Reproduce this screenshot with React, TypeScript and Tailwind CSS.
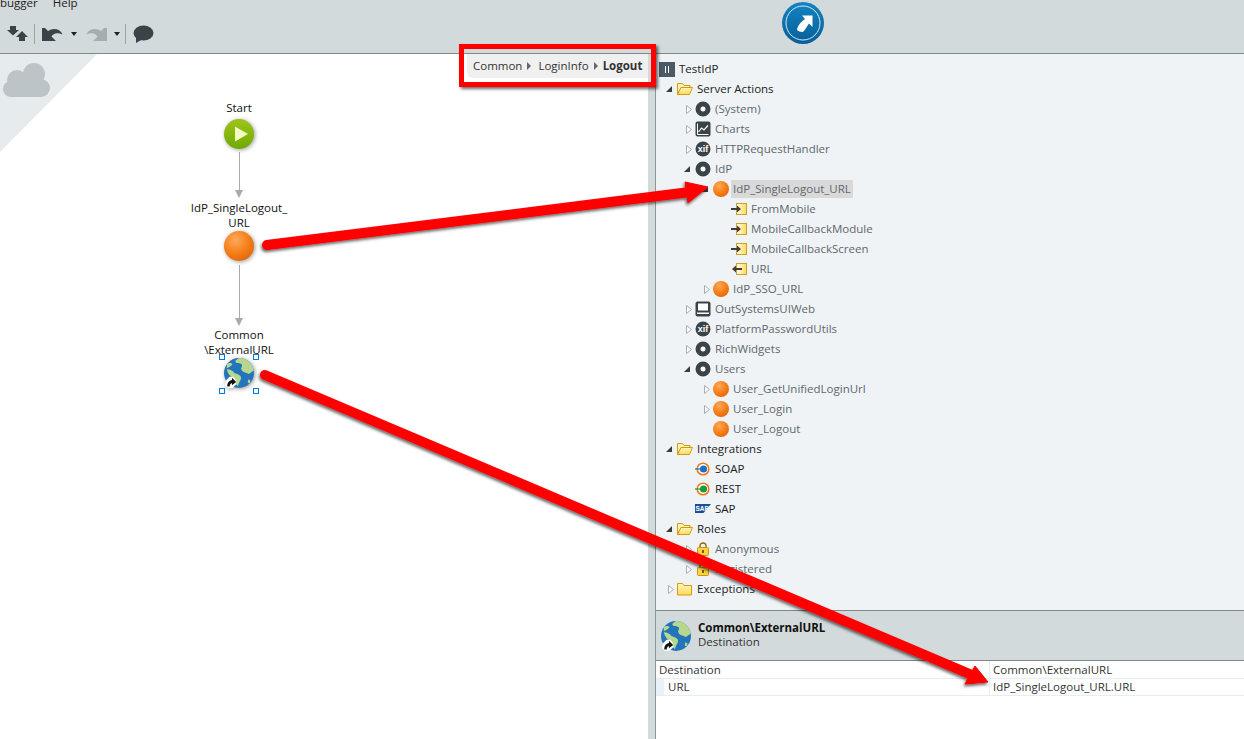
import React from "react"

const UI_FONT = "font-['Open_Sans','Noto_Sans',sans-serif]"

function Ball({ size = 16 }: { size?: number }) {
  return (
    <svg width={size} height={size} viewBox="0 0 32 32">
      <defs>
        <radialGradient id="ballGrad" cx="0.38" cy="0.3" r="0.8">
          <stop offset="0" stopColor="#ffa95c" />
          <stop offset="0.55" stopColor="#f57f17" />
          <stop offset="1" stopColor="#e2620a" />
        </radialGradient>
      </defs>
      <circle cx="16" cy="16" r="16" fill="url(#ballGrad)" />
    </svg>
  )
}

function ModuleIcon() {
  return (
    <svg width="16" height="16" viewBox="0 0 16 16">
      <circle cx="8" cy="8" r="5" fill="#fff" stroke="#3a4448" strokeWidth="5" />
    </svg>
  )
}

function XifIcon() {
  return (
    <svg width="16" height="16" viewBox="0 0 16 16">
      <circle cx="8" cy="8" r="7.5" fill="#3a4448" />
      <text x="8" y="11" textAnchor="middle" fontSize="9" fontWeight="700" fill="#fff" fontFamily="Liberation Sans, sans-serif">xif</text>
    </svg>
  )
}

function ChartIcon() {
  return (
    <svg width="16" height="16" viewBox="0 0 16 16">
      <rect x="0.5" y="0.5" width="15" height="15" rx="2" fill="#3a4448" />
      <path d="M2.5 2.5V13.5H13.5" fill="none" stroke="#fff" strokeWidth="1" />
      <path d="M3.5 11L6.5 7L9 9L13 4.5" fill="none" stroke="#fff" strokeWidth="1.2" />
    </svg>
  )
}

function MonitorIcon() {
  return (
    <svg width="16" height="16" viewBox="0 0 16 16">
      <rect x="0.5" y="0.5" width="15" height="15" rx="2" fill="#3a4448" />
      <rect x="3" y="2.5" width="10" height="7" fill="#fff" />
      <rect x="2" y="11.5" width="12" height="1.5" fill="#fff" />
    </svg>
  )
}

function FolderIcon({ open = true }: { open?: boolean }) {
  return (
    <svg width="16" height="14" viewBox="0 0 16 14">
      <defs>
        <linearGradient id="folderGrad" x1="0" y1="0" x2="0" y2="1">
          <stop offset="0" stopColor="#fff6bf" />
          <stop offset="1" stopColor="#ffd95a" />
        </linearGradient>
      </defs>
      {open ? (
        <>
          <path d="M0.5 12.5V1.5H5.5L7 3.5H13V5.5H4L0.5 12.5Z" fill="#fff3b5" stroke="#d69a0d" />
          <path d="M0.5 12.5L4 5.5H15.5L12.5 12.5Z" fill="url(#folderGrad)" stroke="#d69a0d" />
        </>
      ) : (
        <path d="M0.5 13V1.5H5.5L7 3.5H14.5V13Z" fill="url(#folderGrad)" stroke="#d69a0d" />
      )}
    </svg>
  )
}

function ParamIcon({ dir }: { dir: "in" | "out" }) {
  return (
    <svg width="16" height="12" viewBox="0 0 16 12">
      <defs>
        <linearGradient id="paramGrad" x1="0" y1="0" x2="1" y2="0">
          <stop offset="0" stopColor="#fff" />
          <stop offset="1" stopColor="#ffd94f" />
        </linearGradient>
      </defs>
      <rect x="5.5" y="0.5" width="10" height="11" fill="url(#paramGrad)" stroke="#c9a227" />
      {dir === "in" ? (
        <path d="M0 5H6V2.5L10 6L6 9.5V7H0Z" fill="#4a3a34" />
      ) : (
        <path d="M11 5H5V2.5L1 6L5 9.5V7H11Z" fill="#4a3a34" />
      )}
    </svg>
  )
}

function LockIcon() {
  return (
    <svg width="12" height="14" viewBox="0 0 12 14">
      <path d="M3 6V3.8C3 2.2 4.3 1 6 1S9 2.2 9 3.8V6" fill="none" stroke="#8f6a12" strokeWidth="1.4" />
      <rect x="0.5" y="5.5" width="11" height="8" rx="1" fill="#ffd23f" stroke="#c9960f" />
      <rect x="5" y="8" width="2" height="3" fill="#7a5a10" />
    </svg>
  )
}

function ServiceIcon({ color }: { color: string }) {
  return (
    <svg width="16" height="14" viewBox="0 0 16 14">
      <circle cx="8" cy="7" r="5.8" fill="#fff" stroke="#ee7a1a" strokeWidth="1.6" />
      <circle cx="8.5" cy="7" r="3.6" fill={color} />
      <path d="M0 7H5" stroke={color} strokeWidth="1.2" />
    </svg>
  )
}

function SapIcon() {
  return (
    <svg width="16" height="10" viewBox="0 0 16 10">
      <path d="M0 0H16L8.5 9H0Z" fill="#1b4f9c" />
      <text x="0.5" y="7" fontSize="6.5" fontWeight="700" fill="#fff" fontFamily="Liberation Sans, sans-serif">SAP</text>
    </svg>
  )
}

function Globe({ size }: { size: number }) {
  return (
    <svg width={size} height={size} viewBox="0 0 32 32">
      <defs>
        <clipPath id="globeClip"><circle cx="16" cy="16" r="16" /></clipPath>
      </defs>
      <g clipPath="url(#globeClip)">
        <rect width="32" height="32" fill="#2474bb" />
        <path d="M16 0C13 2 11 3 13 5C15 6 18 5 19 7C20 10 17 10 19 13C21 16 24 15 26 17C28 17 30 14 33 13V0Z" fill="#b7d78f" />
        <path d="M3 6C6 5 8 5 9 7C7 9 5 10 3 11Z" fill="#b7d78f" />
        <path d="M3 12C7 12 10 14 11 16C14 17 17 18 18 20C19 23 16 25 15 30C12 28 11 24 10 21C7 20 4 17 3 12Z" fill="#b7d78f" />
        <path d="M26 23C28 23 29 25 27 27C25 27 25 25 26 23Z" fill="#b7d78f" />
      </g>
      <path d="M2 24L6 20H10L13 24V28L9 32H4L1 29Z" fill="#fff" />
      <path d="M3.5 30.5C3.5 26 5.5 24 8.5 23.5V21L13 25.5L8.5 29V26.8C7 27 6.2 28.3 6 30.5Z" fill="#111" />
    </svg>
  )
}

function PlayBall() {
  return (
    <svg width="30" height="30" viewBox="0 0 30 30">
      <defs>
        <linearGradient id="startGrad" x1="0" y1="0" x2="0" y2="1">
          <stop offset="0" stopColor="#9ec41d" />
          <stop offset="1" stopColor="#6eaa00" />
        </linearGradient>
      </defs>
      <circle cx="15" cy="15" r="15" fill="url(#startGrad)" />
      <path d="M11 7.5L24 15L11 22.5Z" fill="#f3fbc0" />
    </svg>
  )
}

function Caret() {
  return <span className="w-0 h-0 border-x-[3.5px] border-x-transparent border-t-[4px] border-t-[#1c2326]" />
}

function Toolbar() {
  return (
    <div className="flex items-center h-[36px] pl-[7px]">
      <svg width="21" height="16" viewBox="0 0 21 16">
        <path d="M0 4H3V0H9V4H12L6 9.5Z" fill="#3a4448" />
        <path d="M9 11L15 5L21 11H18V15H12V11Z" fill="#3a4448" />
      </svg>
      <div className="w-px h-5 bg-[#9aa3a5] ml-[6px] mr-[7px]" />
      <svg width="21" height="15" viewBox="0 0 21 15">
        <path d="M0 1V14H14L9.5 9.5C11 6.5 15 5 20.5 7.5C18 1.5 11 0.5 6 4L3 1Z" fill="#3a4448" />
      </svg>
      <div className="ml-[8px] mr-[9px] flex"><Caret /></div>
      <svg width="21" height="15" viewBox="0 0 21 15">
        <path d="M21 1V14H7L11.5 9.5C10 6.5 6 5 0.5 7.5C3 1.5 10 0.5 15 4L18 1Z" fill="#a5adaf" />
      </svg>
      <div className="ml-[7px] flex"><Caret /></div>
      <div className="w-px h-5 bg-[#9aa3a5] ml-[5px] mr-[7px]" />
      <svg width="21" height="19" viewBox="0 0 21 19">
        <ellipse cx="10.5" cy="8" rx="10" ry="7.5" fill="#3a4448" />
        <path d="M3 12L3 18L10 14Z" fill="#3a4448" />
      </svg>
    </div>
  )
}

function TopBar() {
  return (
    <div className="flex h-[54px] shrink-0 bg-[#d3dadb] border-b border-[#81888a]">
      <div className="w-[782px] overflow-hidden">
        <div className={`flex h-[17px] -mt-[1px] items-end text-[11.5px] leading-none text-[#222] ${UI_FONT}`}>
          <span className="pb-[8px]">bugger</span>
          <span className="ml-[15px] pb-[8px]">Help</span>
        </div>
        <Toolbar />
      </div>
      <div className="pt-[2px]">
        <svg width="42" height="42" viewBox="0 0 42 42">
          <defs>
            <linearGradient id="pubGrad" x1="0" y1="0" x2="0" y2="1">
              <stop offset="0" stopColor="#1383c2" />
              <stop offset="1" stopColor="#075f99" />
            </linearGradient>
          </defs>
          <circle cx="21" cy="21" r="21" fill="url(#pubGrad)" />
          <circle cx="21" cy="21" r="17" fill="none" stroke="#d4e7f2" strokeWidth="1" />
          <path d="M20 13.5H30.5V25L27 21.5C25 24 24 27 21 30C18 30 16 29 15 28C15.5 24 18.5 20 23 17Z" fill="#fff" />
        </svg>
      </div>
    </div>
  )
}

function FlowNode({ label, x, y, children }: { label: string[]; x: number; y: number; children: React.ReactNode }) {
  // x = centre of the icon, y = top of the label, on the free canvas
  return (
    <div className="absolute w-[120px] flex flex-col items-center" style={{ left: x - 60, top: y }}>
      <div className="text-[11.5px] leading-[15px] text-[#111] text-center whitespace-nowrap">
        {label.map((l) => <div key={l}>{l}</div>)}
      </div>
      {children}
    </div>
  )
}

function Connector({ x, y, h }: { x: number; y: number; h: number }) {
  return (
    <div className="absolute flex flex-col items-center w-[10px]" style={{ left: x - 5, top: y }}>
      <div className="w-px bg-[#a9a9a9]" style={{ height: h }} />
      <div className="w-0 h-0 border-x-[4px] border-x-transparent border-t-[8px] border-t-[#a9a9a9]" />
    </div>
  )
}

function Handle({ x, y }: { x: number; y: number }) {
  return <div className="absolute w-[6px] h-[6px] bg-white border border-[#0078d7]" style={{ left: x, top: y }} />
}

function Canvas() {
  return (
    <div className="relative w-[648px] bg-white overflow-hidden">
      <svg className="absolute left-0 top-0" width="100" height="100" viewBox="0 0 100 100">
        <path d="M0 0H97L0 98Z" fill="#e6ebed" />
        <g fill="#bdc4c7">
          <circle cx="34" cy="20" r="11" />
          <circle cx="17" cy="26" r="10" />
          <circle cx="11" cy="35" r="8" />
          <circle cx="41" cy="34" r="9" />
          <rect x="11" y="28" width="30" height="15" />
        </g>
      </svg>

      <FlowNode label={["Start"]} x={239} y={46}>
        <div className="mt-[4px] drop-shadow-[1px_1px_2px_rgba(0,0,0,0.4)] flex"><PlayBall /></div>
      </FlowNode>
      <Connector x={239} y={98} h={38} />
      <FlowNode label={["IdP_SingleLogout_", "URL"]} x={239} y={146}>
        <div className="mt-[1px] drop-shadow-[1px_1px_2px_rgba(0,0,0,0.4)] flex"><Ball size={30} /></div>
      </FlowNode>
      <Connector x={239} y={211} h={53} />
      <FlowNode label={["Common", "\\ExternalURL"]} x={239} y={273}>
        <div className="mt-[1px] drop-shadow-[1px_1px_2px_rgba(0,0,0,0.4)] flex"><Globe size={30} /></div>
      </FlowNode>
      <Handle x={219} y={300} />
      <Handle x={253} y={300} />
      <Handle x={219} y={334} />
      <Handle x={253} y={334} />

      <div className={`absolute right-0 top-0 h-[24px] w-[181px] bg-[#f0f0f0] rounded-bl-[6px] flex items-center gap-[5px] pl-[6px] text-[11.5px] text-[#333] ${UI_FONT}`}>
        <span>Common</span>
        <span className="w-0 h-0 border-y-[4px] border-y-transparent border-l-[4px] border-l-[#666]" />
        <span className="-ml-[0px] pl-[2px]">LoginInfo</span>
        <span className="w-0 h-0 border-y-[4px] border-y-transparent border-l-[4px] border-l-[#666]" />
        <span className="font-bold">Logout</span>
      </div>
    </div>
  )
}

type TreeRow = {
  level: number
  arrow?: "open" | "closed"
  icon?: React.ReactNode
  label: string
  dark?: boolean
  selected?: boolean
}

const rows: TreeRow[] = [
  { level: 1, arrow: "open", icon: <FolderIcon />, label: "Server Actions", dark: true },
  { level: 2, arrow: "closed", icon: <ModuleIcon />, label: "(System)" },
  { level: 2, arrow: "closed", icon: <ChartIcon />, label: "Charts" },
  { level: 2, arrow: "closed", icon: <XifIcon />, label: "HTTPRequestHandler" },
  { level: 2, arrow: "open", icon: <ModuleIcon />, label: "IdP" },
  { level: 3, arrow: "open", icon: <Ball />, label: "IdP_SingleLogout_URL", selected: true },
  { level: 4, icon: <ParamIcon dir="in" />, label: "FromMobile" },
  { level: 4, icon: <ParamIcon dir="in" />, label: "MobileCallbackModule" },
  { level: 4, icon: <ParamIcon dir="in" />, label: "MobileCallbackScreen" },
  { level: 4, icon: <ParamIcon dir="out" />, label: "URL" },
  { level: 3, arrow: "closed", icon: <Ball />, label: "IdP_SSO_URL" },
  { level: 2, arrow: "closed", icon: <MonitorIcon />, label: "OutSystemsUIWeb" },
  { level: 2, arrow: "closed", icon: <XifIcon />, label: "PlatformPasswordUtils" },
  { level: 2, arrow: "closed", icon: <ModuleIcon />, label: "RichWidgets" },
  { level: 2, arrow: "open", icon: <ModuleIcon />, label: "Users" },
  { level: 3, arrow: "closed", icon: <Ball />, label: "User_GetUnifiedLoginUrl" },
  { level: 3, arrow: "closed", icon: <Ball />, label: "User_Login" },
  { level: 3, icon: <Ball />, label: "User_Logout" },
  { level: 1, arrow: "open", icon: <FolderIcon />, label: "Integrations", dark: true },
  { level: 2, icon: <ServiceIcon color="#1a6fc9" />, label: "SOAP", dark: true },
  { level: 2, icon: <ServiceIcon color="#1d9a3c" />, label: "REST", dark: true },
  { level: 2, icon: <SapIcon />, label: "SAP", dark: true },
  { level: 1, arrow: "open", icon: <FolderIcon />, label: "Roles", dark: true },
  { level: 2, arrow: "closed", icon: <LockIcon />, label: "Anonymous" },
  { level: 2, arrow: "closed", icon: <LockIcon />, label: "Registered" },
  { level: 1, arrow: "closed", icon: <FolderIcon open={false} />, label: "Exceptions", dark: true },
]

const indent: Record<number, string> = { 1: "pl-[9px]", 2: "pl-[27px]", 3: "pl-[45px]", 4: "pl-[63px]" }

function Row({ row }: { row: TreeRow }) {
  return (
    <div className={`flex items-center h-5 ${indent[row.level]}`}>
      <span className="w-3 flex items-center justify-center">
        {row.arrow === "open" && (
          <span className="mr-[4px] w-0 h-0 border-l-[6px] border-l-transparent border-b-[6px] border-b-[#3c3c3c]" />
        )}
        {row.arrow === "closed" && (
          <svg width="6" height="9" viewBox="0 0 6 9"><path d="M0.5 0.5L5.5 4.5L0.5 8.5Z" fill="#fff" stroke="#a8aeb1" /></svg>
        )}
      </span>
      <span className="w-4 flex items-center justify-center">{row.icon}</span>
      <span
        className={`ml-[2px] px-[2px] h-[18px] leading-[18px] whitespace-nowrap ${row.dark ? "text-[#222]" : "text-[#60686c]"} ${row.selected ? "bg-[#d9d9d9]" : ""}`}
      >
        {row.label}
      </span>
    </div>
  )
}

function Tree() {
  return (
    <div className={`flex-1 bg-[#eff3f6] pt-[5px] text-[11.5px] ${UI_FONT}`}>
      <div className="flex items-center h-5 pl-[3px]">
        <span className="w-4 h-[15px] bg-[#4a5a66] flex items-center justify-center gap-[2px]">
          <span className="w-px h-[7px] bg-white" />
          <span className="w-px h-[7px] bg-white" />
        </span>
        <span className="ml-1 text-[#222]">TestIdP</span>
      </div>
      {rows.map((r) => <Row key={r.label} row={r} />)}
    </div>
  )
}

function Properties() {
  return (
    <div className={`h-[129px] shrink-0 bg-white border-t border-[#81888a] text-[11.5px] ${UI_FONT}`}>
      <div className="h-[50px] bg-[#d3dadb] border-b border-[#81888a] flex items-center pl-[5px] gap-[7px]">
        <Globe size={30} />
        <div className="leading-[14px] mb-[2px]">
          <div className="font-bold text-[#111]">Common\ExternalURL</div>
          <div className="text-[#333]">Destination</div>
        </div>
      </div>
      <div className="flex h-[18px] items-center text-[#333] border-b border-[#e4eef6]">
        <div className="w-[333px] pl-[3px]">Destination</div>
        <div className="pl-[3px] border-l border-[#e4eef6] h-full leading-[18px]">Common\ExternalURL</div>
      </div>
      <div className="flex h-[17px] items-center text-[#333] border-b border-[#e4eef6]">
        <div className="w-[8px] h-full bg-[#eaf1f8]" />
        <div className="w-[325px] pl-[4px]">URL</div>
        <div className="pl-[3px] border-l border-[#e4eef6] h-full leading-[16px]">IdP_SingleLogout_URL.URL</div>
      </div>
    </div>
  )
}

// red annotations drawn on top of the screenshot
function Annotations() {
  return (
    <>
      <div className="absolute left-[459px] top-[44px] w-[197px] h-[43px] border-[5px] border-[#f00] shadow-[2px_2px_3px_rgba(0,0,0,0.6)]" />
      <svg className="absolute left-0 top-0 pointer-events-none" width="1244" height="739" viewBox="0 0 1244 739">
        <defs>
          <filter id="arrowShadow" x="-5%" y="-20%" width="110%" height="140%">
            <feDropShadow dx="-1" dy="2" stdDeviation="1.5" floodColor="#000" floodOpacity="0.6" />
          </filter>
        </defs>
        <g filter="url(#arrowShadow)" fill="#f00" stroke="#f00">
          <path d="M267 245L690 192" fill="none" strokeWidth="10" strokeLinecap="round" />
          <path d="M685 182L708 187L688 203Z" strokeWidth="1" />
          <path d="M265 375L972 675" fill="none" strokeWidth="10" strokeLinecap="round" />
          <path d="M975 666L988 682L965 684Z" strokeWidth="1" />
        </g>
      </svg>
    </>
  )
}

export default function App() {
  return (
    <div className={`relative w-[1244px] h-[739px] overflow-hidden flex flex-col bg-white text-[11.5px] ${UI_FONT}`}>
      <TopBar />
      <div className="flex flex-1 min-h-0">
        <Canvas />
        <div className="w-[8px] bg-[#d3dadb] border-r border-[#8f9698]" />
        <div className="flex-1 flex flex-col">
          <Tree />
          <Properties />
        </div>
      </div>
      <Annotations />
    </div>
  )
}
